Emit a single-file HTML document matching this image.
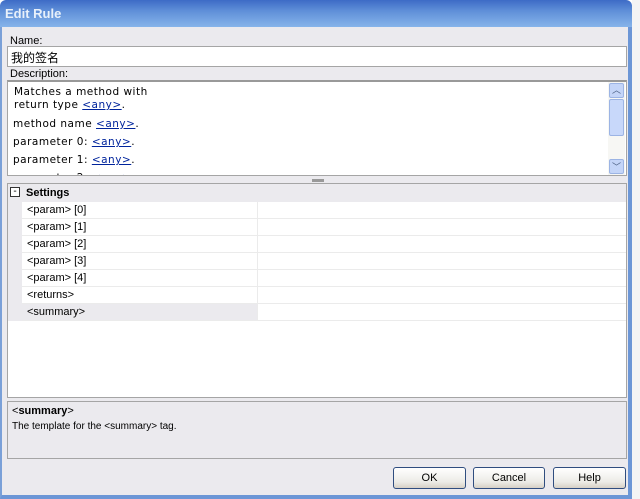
<!DOCTYPE html>
<html><head><style>
*{box-sizing:border-box;margin:0;padding:0}
body{width:640px;height:499px;overflow:hidden;background:#fff;font-family:"Liberation Sans","Noto Sans CJK SC",sans-serif;font-size:11px;position:relative}
.a{position:absolute}
.title{left:0;top:0;width:632px;height:27px;background:linear-gradient(#3d6bc6,#5f8fd8 40%,#86b4ea);color:#e8f0fa;font-weight:bold;font-size:13px;padding:6px 0 0 5px;border-radius:6px 6px 0 0}
.body{left:0;top:27px;width:632px;height:472px;background:#ebeaee;border-left:2px solid #7aa0d8;border-right:4px solid #6c96d6;border-bottom:4px solid #6c96d6}
.lbl{font-size:11px;color:#000}
.mono{font-family:"DejaVu Sans",sans-serif;font-size:10.5px;letter-spacing:0.5px;line-height:18px}
.lnk{color:#00249c;text-decoration:underline}
.row{position:absolute;left:22px;width:604px;height:17px;border-bottom:1px solid #ebebeb;background:#fff}
.row span{position:absolute;left:5px;top:2px}
.row i{position:absolute;left:235px;top:0;bottom:0;border-left:1px solid #ebebeb}
.btn{position:absolute;top:467px;height:22px;border:1px solid #2f4d7f;border-radius:3px;background:linear-gradient(#fff,#ecebe6 70%,#d6d0c5);text-align:center;line-height:20px;font-size:11px}
</style></head><body>
<div class="a" style="left:632px;top:0;width:8px;height:499px;background:#f4f4f4"></div>
<div class="a title">Edit Rule</div>
<div class="a body"></div>
<div class="a lbl" style="left:10px;top:35px">Name:</div>
<div class="a" style="left:7px;top:46px;width:620px;height:21px;background:#fff;border:1px solid #a5a5a5;padding:2px 3px;font-size:12px">我的签名</div>
<div class="a lbl" style="left:10px;top:68px">Description:</div>
<div class="a" style="left:7px;top:80px;width:620px;height:96px;background:#fff;border:1px solid #a5a5a5;border-top:2px solid #999;overflow:hidden">
<div class="mono" style="padding:4px 0 0 6px;line-height:13px">Matches a method with<br>return type <span class="lnk">&lt;any&gt;</span>.</div>
<div class="mono" style="padding:3px 0 0 5px">method name <span class="lnk">&lt;any&gt;</span>.<br>parameter 0: <span class="lnk">&lt;any&gt;</span>.<br>parameter 1: <span class="lnk">&lt;any&gt;</span>.<br>parameter 2: <span class="lnk">&lt;any&gt;</span>.</div>
<div class="a" style="left:600px;top:0;width:17px;height:94px;background:#f7f7f4"></div>
<div class="a" style="left:601px;top:1px;width:15px;height:15px;background:#c4d5f8;border:1px solid #9cb4e4;border-radius:2px;text-align:center;font-size:9px;color:#4d6185;line-height:13px">︿</div>
<div class="a" style="left:601px;top:17px;width:15px;height:37px;background:#c8d8fa;border:1px solid #9cb4e4;border-radius:2px"></div>
<div class="a" style="left:601px;top:77px;width:15px;height:15px;background:#c4d5f8;border:1px solid #9cb4e4;border-radius:2px;text-align:center;font-size:9px;color:#4d6185;line-height:15px">﹀</div>
</div>
<div class="a" style="left:312px;top:179px;width:12px;height:3px;background:#999"></div>
<div class="a" style="left:7px;top:183px;width:620px;height:215px;background:#fff;border:1px solid #a5a5a5"></div>
<div class="a" style="left:8px;top:184px;width:618px;height:18px;background:#ebeaee"></div>
<div class="a" style="left:8px;top:184px;width:14px;height:137px;background:#ebeaee"></div>
<div class="a" style="left:10px;top:187px;width:10px;height:10px;border:1px solid #333;background:#fff;font-size:10px;line-height:7px;text-align:center">-</div>
<div class="a" style="left:26px;top:187px;font-weight:bold;font-size:11px">Settings</div>
<div class="row" style="top:202px"><span>&lt;param&gt; [0]</span><i></i></div>
<div class="row" style="top:219px"><span>&lt;param&gt; [1]</span><i></i></div>
<div class="row" style="top:236px"><span>&lt;param&gt; [2]</span><i></i></div>
<div class="row" style="top:253px"><span>&lt;param&gt; [3]</span><i></i></div>
<div class="row" style="top:270px"><span>&lt;param&gt; [4]</span><i></i></div>
<div class="row" style="top:287px"><span>&lt;returns&gt;</span><i></i></div>
<div class="row" style="top:304px;background:linear-gradient(90deg,#ebeaee 235px,#fff 235px)"><span>&lt;summary&gt;</span><i></i></div>
<div class="a" style="left:7px;top:401px;width:620px;height:58px;border:1px solid #a5a5a5;background:#ebeaee"></div>
<div class="a" style="left:12px;top:405px;font-size:11px">&lt;<b>summary</b>&gt;</div>
<div class="a" style="left:12px;top:421px;font-size:10px">The template for the &lt;summary&gt; tag.</div>
<div class="btn" style="left:393px;width:73px">OK</div>
<div class="btn" style="left:473px;width:72px">Cancel</div>
<div class="btn" style="left:553px;width:73px">Help</div>
</body></html>
